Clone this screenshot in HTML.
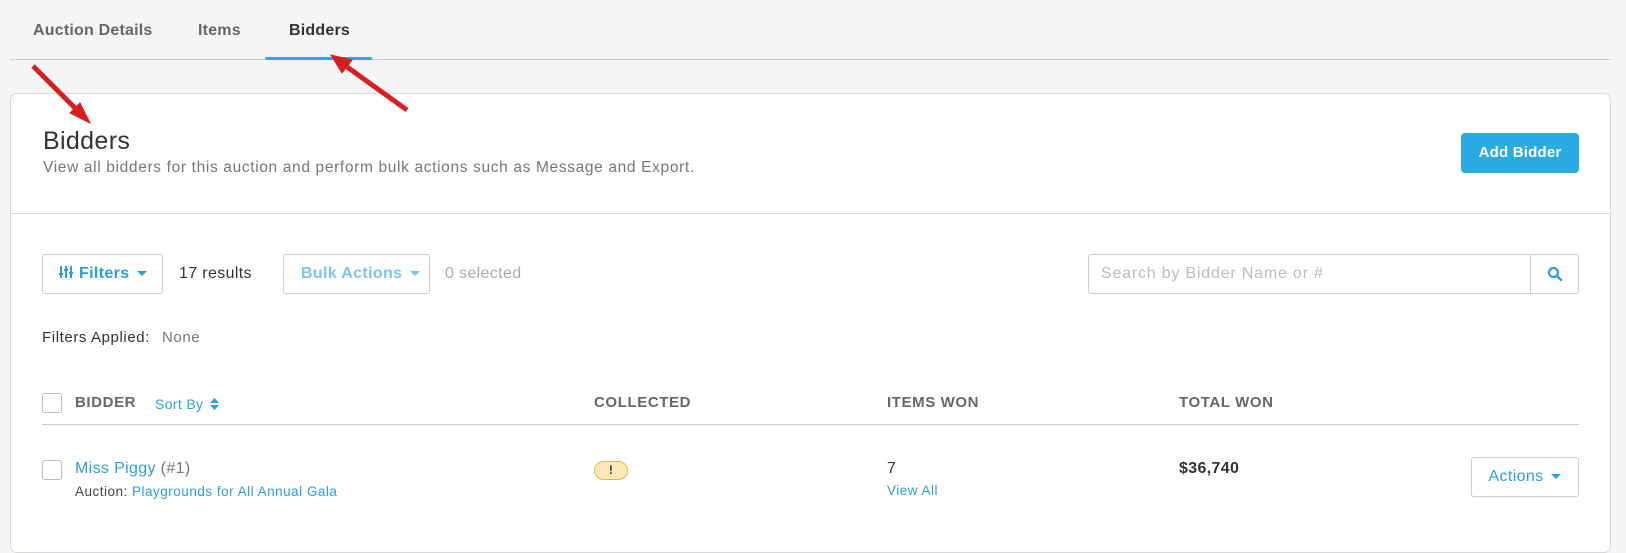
<!DOCTYPE html>
<html><head><meta charset="utf-8"><style>
*{box-sizing:border-box;margin:0;padding:0}
body{width:1626px;height:533px;background:#f4f5f7;font-family:"Liberation Sans",sans-serif;position:relative;overflow:hidden;color:#333;letter-spacing:0.35px}
.a{position:absolute;white-space:nowrap}
.tab{font-size:16px;color:#666;top:22px;font-weight:bold;letter-spacing:0.2px}
.card{position:absolute;left:10px;top:93px;width:1601px;height:460px;background:#fff;border:1px solid #d6d8db;border-radius:7px}
.btn{position:absolute;border:1px solid #ccc;border-radius:3px;background:#fff;height:40px}
.lbl{font-size:15px;color:#666;letter-spacing:0.6px;top:394px}
.cb{position:absolute;width:20px;height:20px;border:1px solid #bbb;border-radius:3px;background:#fff}
.blue{color:#2d9fd9}
.caret{display:inline-block;width:0;height:0;border-left:5px solid transparent;border-right:5px solid transparent;border-top:5px solid currentColor;vertical-align:middle;margin-left:8px}
</style></head><body>
<div class="a tab" style="left:33px">Auction Details</div>
<div class="a tab" style="left:198px">Items</div>
<div class="a tab" style="left:289px;color:#333">Bidders</div>
<div class="a" style="left:10px;top:59px;width:1601px;height:1px;background:#ccc"></div>
<div class="a" style="left:265px;top:57px;width:107px;height:3px;background:#29abe2;border-radius:2px"></div>

<div class="card"></div>
<div class="a" style="left:43px;top:127px;font-size:25px;color:#333">Bidders</div>
<div class="a" style="left:43px;top:159px;font-size:15.5px;color:#777;letter-spacing:0.65px">View all bidders for this auction and perform bulk actions such as Message and Export.</div>
<div class="a" style="left:1461px;top:133px;width:118px;height:40px;background:#29abe2;border-radius:4px;color:#fff;font-weight:bold;font-size:15px;text-align:center;line-height:40px;letter-spacing:0.2px">Add Bidder</div>
<div class="a" style="left:10px;top:213px;width:1601px;height:1px;background:#d6d8db"></div>

<div class="btn blue" style="left:42px;top:254px;width:121px;font-size:16px;line-height:38px;padding-left:16px;font-weight:bold">
<svg width="14" height="14" viewBox="0 0 14 14" style="vertical-align:-1px;margin-right:6px"><g stroke="#2d9fd9" stroke-width="2"><line x1="2" y1="1" x2="2" y2="13"/><line x1="7" y1="1" x2="7" y2="13"/><line x1="12" y1="1" x2="12" y2="13"/></g><g fill="#2d9fd9"><rect x="0" y="8" width="4" height="2"/><rect x="5" y="4" width="4" height="2"/><rect x="10" y="7" width="4" height="2"/></g></svg>Filters<span class="caret"></span></div>
<div class="a" style="left:179px;top:265px;font-size:16px;color:#333">17 results</div>
<div class="btn" style="left:283px;top:254px;width:147px;font-size:16px;line-height:38px;padding-left:17px;color:#7cc5ea;font-weight:bold">Bulk Actions<span class="caret"></span></div>
<div class="a" style="left:445px;top:265px;font-size:16px;color:#aaa">0 selected</div>
<div class="btn" style="left:1088px;top:254px;width:443px;border-radius:3px 0 0 3px;font-size:16px;color:#bbb;line-height:38px;padding-left:12px;letter-spacing:0.8px">Search by Bidder Name or #</div>
<div class="btn" style="left:1530px;top:254px;width:49px;border-radius:0 3px 3px 0">
<svg width="16" height="16" viewBox="0 0 16 16" style="position:absolute;left:16px;top:11px"><circle cx="6.5" cy="6.5" r="4.5" fill="none" stroke="#2d9fd9" stroke-width="2.2"/><line x1="10" y1="10" x2="14" y2="14" stroke="#2d9fd9" stroke-width="2.5" stroke-linecap="round"/></svg></div>

<div class="a" style="left:42px;top:329px;font-size:15px;color:#333;letter-spacing:0.6px">Filters Applied:<span style="color:#777;margin-left:12px">None</span></div>

<div class="cb" style="left:42px;top:393px"></div>
<div class="a lbl" style="left:75px;font-weight:bold">BIDDER</div>
<div class="a blue" style="left:155px;top:396px;font-size:14px">Sort By <svg width="9" height="12" viewBox="0 0 9 12" style="vertical-align:-1px;margin-left:2px"><polygon points="4.5,0 9,5 0,5" fill="#2d9fd9"/><polygon points="4.5,12 9,7 0,7" fill="#2d9fd9"/></svg></div>
<div class="a lbl" style="left:594px;font-weight:bold">COLLECTED</div>
<div class="a lbl" style="left:887px;font-weight:bold">ITEMS WON</div>
<div class="a lbl" style="left:1179px;font-weight:bold">TOTAL WON</div>
<div class="a" style="left:42px;top:424px;width:1537px;height:1px;background:#ccc"></div>

<div class="cb" style="left:42px;top:460px"></div>
<div class="a" style="left:75px;top:460px;font-size:16px"><span class="blue">Miss Piggy</span> <span style="color:#777">(#1)</span></div>
<div class="a" style="left:75px;top:484px;font-size:13.5px;color:#444;letter-spacing:0.5px">Auction: <span class="blue">Playgrounds for All Annual Gala</span></div>
<div class="a" style="left:594px;top:461px;width:34px;height:19px;background:#fde8b8;border:1px solid #e7b54a;border-radius:10px;text-align:center;font-size:12px;font-weight:bold;line-height:17px;color:#333">!</div>
<div class="a" style="left:887px;top:460px;font-size:16px">7</div>
<div class="a blue" style="left:887px;top:483px;font-size:13.5px;letter-spacing:0.5px">View All</div>
<div class="a" style="left:1179px;top:460px;font-size:16px;font-weight:bold;color:#333">$36,740</div>
<div class="btn blue" style="left:1471px;top:457px;width:108px;font-size:16px;line-height:38px;text-align:center">Actions<span class="caret"></span></div>

<svg class="a" style="left:0;top:0" width="1626" height="533"><g stroke="#d81e1e" stroke-width="5" fill="#d81e1e">
<line x1="33" y1="66" x2="78" y2="111"/><polygon points="90,123 70,113 80,103" stroke-width="1"/>
<line x1="407" y1="110" x2="343" y2="64"/><polygon points="331,55 352,60 342,73" stroke-width="1"/></g></svg>
</body></html>
